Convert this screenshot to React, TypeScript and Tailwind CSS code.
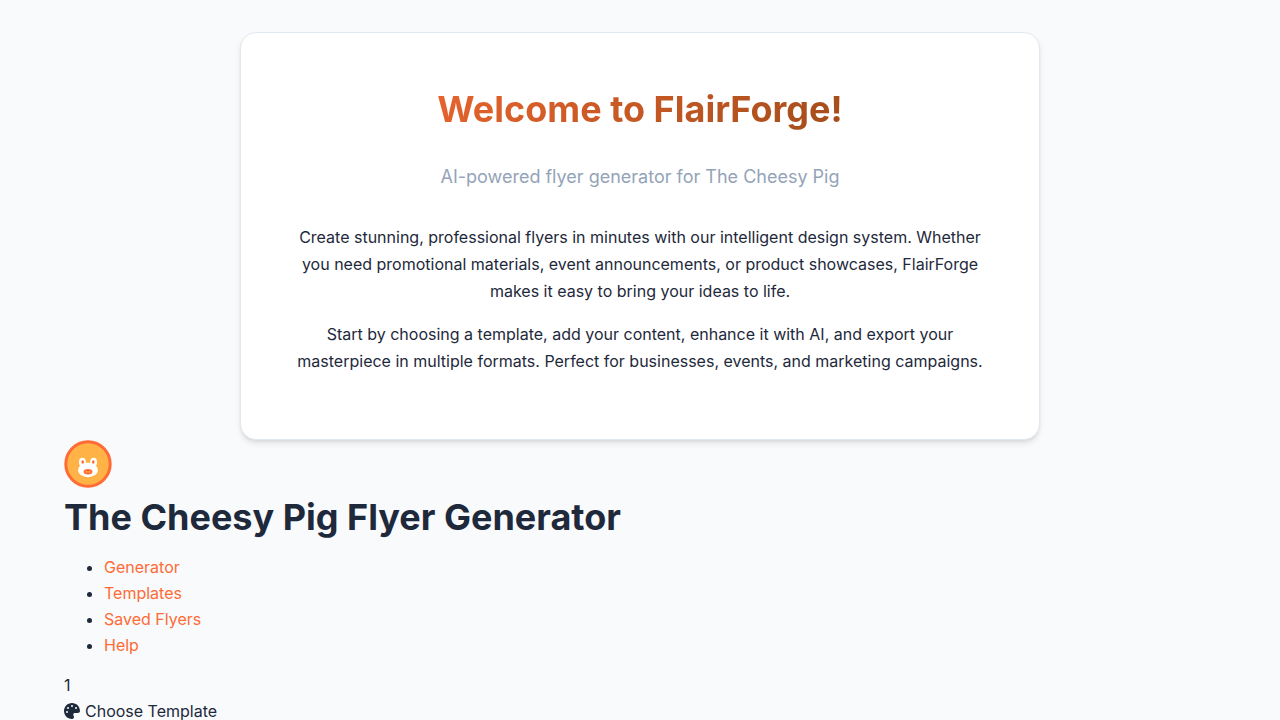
import { FaPalette } from "react-icons/fa6";

const navItems = ["Generator", "Templates", "Saved Flyers", "Help"];

function PigLogo() {
  return (
    <svg viewBox="0 0 48 48" className="size-12" role="img" aria-label="The Cheesy Pig">
      <circle cx="24" cy="24" r="22.2" fill="#ffb347" stroke="#ff6b35" strokeWidth="3" />
      <ellipse cx="24" cy="30" rx="10" ry="7.2" fill="#fff" />
      <ellipse cx="18.4" cy="22.2" rx="3.4" ry="4.4" fill="#fff" />
      <ellipse cx="29.6" cy="22.2" rx="3.4" ry="4.4" fill="#fff" />
      <ellipse cx="18.7" cy="22" rx="1.3" ry="1.7" fill="#ff6b35" />
      <ellipse cx="29.3" cy="22" rx="1.3" ry="1.7" fill="#ff6b35" />
      <ellipse cx="24" cy="31.8" rx="4.4" ry="2.7" fill="#ff6b35" />
      <ellipse cx="22.5" cy="31.8" rx="0.9" ry="0.9" fill="#ffb347" />
      <ellipse cx="25.5" cy="31.8" rx="0.9" ry="0.9" fill="#ffb347" />
    </svg>
  );
}

export default function App() {
  return (
    <div className="min-h-screen bg-[#f8fafc] px-16 pt-8 font-['Inter',sans-serif] text-base leading-[26px] text-[#1e293b]">
      <section className="mx-auto max-w-[800px] rounded-2xl border border-[#e2e8f0] bg-white p-12 text-center shadow-md">
        <h1 className="mb-6 bg-[linear-gradient(135deg,#ff6b35,#8b4513)] bg-clip-text text-4xl leading-[57px] font-bold text-transparent">
          Welcome to FlairForge!
        </h1>
        <p className="mb-[33px] text-lg leading-[29px] text-[#94a3b8]">
          AI-powered flyer generator for The Cheesy Pig
        </p>
        <p className="mb-4 leading-[27px]">
          Create stunning, professional flyers in minutes with our intelligent design system. Whether
          you need promotional materials, event announcements, or product showcases, FlairForge makes
          it easy to bring your ideas to life.
        </p>
        <p className="mb-4 leading-[27px]">
          Start by choosing a template, add your content, enhance it with AI, and export your
          masterpiece in multiple formats. Perfect for businesses, events, and marketing campaigns.
        </p>
      </section>

      <header>
        <PigLogo />
        <h1 className="mb-2 text-4xl leading-[58px] font-bold">The Cheesy Pig Flyer Generator</h1>
        <nav>
          <ul className="mb-[14px] list-disc pl-10">
            {navItems.map((item) => (
              <li key={item}>
                <a href="#" className="text-[#ff6b35]">
                  {item}
                </a>
              </li>
            ))}
          </ul>
        </nav>
      </header>

      <main>
        <div>1</div>
        <div className="flex items-center gap-[5px]">
          <FaPalette className="size-4" aria-hidden="true" />
          <span>Choose Template</span>
        </div>
      </main>
    </div>
  );
}
